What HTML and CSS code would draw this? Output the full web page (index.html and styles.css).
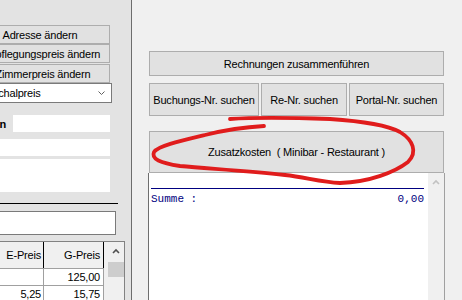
FILE: index.html
```html
<!DOCTYPE html>
<html lang="de">
<head>
    <meta charset="UTF-8">
    <title>Rechnungen</title>
    <link rel="stylesheet" href="styles.css">
</head>
<body>
    <div class="screen">
        <aside class="side">
            <div class="side-inner">
                <button class="btn side-btn">Adresse ändern</button>
                <button class="btn side-btn">Verpflegungspreis ändern</button>
                <button class="btn side-btn spaced">Zimmerpreis ändern</button>
                <div class="select">
                    <span>Pauschalpreis</span>
                    <svg width="7" height="5" viewBox="0 0 7 5"><polyline points="0.5,0.5 3.5,3.5 6.5,0.5" fill="none" stroke="#606060" stroke-width="1"/></svg>
                </div>

                <div class="field-row">
                    <label>Personen</label>
                    <div class="field short"></div>
                </div>
                <div class="field wide"></div>
                <div class="field area"></div>

                <div class="rule"></div>
                <div class="box"></div>

                <div class="grid">
                    <div class="cols">
                        <div class="row head">
                            <div class="cell c1">E-Preis</div>
                            <div class="cell c2">G-Preis</div>
                        </div>
                        <div class="row">
                            <div class="cell c1"></div>
                            <div class="cell c2">125,00</div>
                        </div>
                        <div class="row">
                            <div class="cell c1">5,25</div>
                            <div class="cell c2">15,75</div>
                        </div>
                    </div>
                    <div class="grid-gap"></div>
                    <div class="vbar">
                        <div class="arrow">
                            <svg width="8" height="6" viewBox="0 0 8 6"><polyline points="1,5 4,2 7,5" fill="none" stroke="#505050" stroke-width="1.6"/></svg>
                        </div>
                        <div class="thumb"></div>
                    </div>
                </div>
            </div>
        </aside>

        <main class="main">
            <button class="btn wide-btn">Rechnungen zusammenführen</button>
            <div class="btn-row">
                <button class="btn b-buchung">Buchungs-Nr. suchen</button>
                <button class="btn b-re">Re-Nr. suchen</button>
                <button class="btn b-portal">Portal-Nr. suchen</button>
            </div>
            <button class="btn zusatz">Zusatzkosten&nbsp; ( Minibar - Restaurant )</button>

            <div class="report">
                <div class="paper">
                    <div class="sum-rule"></div>
                    <div class="sum">
                        <span>Summe :</span>
                        <span>0,00</span>
                    </div>
                </div>
                <div class="vbar light">
                    <div class="arrow">
                        <svg width="8" height="6" viewBox="0 0 8 6"><polyline points="1,5 4,2 7,5" fill="none" stroke="#c2c2c2" stroke-width="1.6"/></svg>
                    </div>
                </div>
            </div>
        </main>

        <!-- red hand drawn marking on top of the screenshot -->
        <svg class="markup" width="462" height="300" viewBox="0 0 462 300">
            <path d="M264,126 C245,127 225,130 205,135 C180,141 158,146 154,152 C151,159 160,163 180,166 C215,169 250,171 285,175 C305,177 320,182 340,183 C370,182 395,172 408,162 C418,152 413,140 400,132 C385,124 360,121 330,119 C300,118 260,117 230,119"
                  fill="none" stroke="#e01c1c" stroke-width="3.8" stroke-linecap="round" stroke-linejoin="round"/>
        </svg>
    </div>
</body>
</html>
```

FILE: styles.css
```css
body {
    margin: 0;
    background-color: #f0f0f0;
    font-family: "Liberation Sans", Arial, sans-serif;
    font-size: 11px;
    letter-spacing: -0.2px;
    color: #000;
}

.screen {
    position: relative;
    display: flex;
    width: 462px;
    height: 300px;
    overflow: hidden;
}

.btn {
    font: inherit;
    letter-spacing: inherit;
    color: #000;
    background-color: #e1e1e1;
    border: 1px solid #adadad;
    padding: 0;
    box-sizing: border-box;
    white-space: nowrap;
}

/* left panel, cut off at the window edge */
.side {
    width: 131px;
    flex: none;
    background-color: #e3e3e3;
    border-right: 1px solid #6d6d6d;
    overflow: hidden;
}

.side-inner {
    margin-left: -30px;
    padding-top: 25px;
    display: flex;
    flex-direction: column;
    align-items: flex-start;
}

.side-btn {
    width: 140px;
    height: 19px;
}

.spaced {
    width: 134px;
    margin: 1px 0 0 6px;
}

.select {
    width: 142px;
    height: 20px;
    box-sizing: border-box;
    background-color: #fff;
    border: 1px solid #7a7a7a;
    display: flex;
    align-items: center;
    justify-content: space-between;
    padding: 0 6px 0 3px;
}

.field-row {
    display: flex;
    align-items: center;
    margin-top: 12px;
}

.field-row label {
    width: 36px;
    display: flex;
    justify-content: flex-end;
    font-weight: bold;
    white-space: nowrap;
}

.field {
    background-color: #fff;
    height: 17px;
}

.short {
    width: 97px;
    margin-left: 7px;
}

.wide {
    width: 140px;
    margin-top: 7px;
}

.area {
    width: 140px;
    height: 33px;
    margin-top: 3px;
}

.rule {
    width: 148px;
    height: 1px;
    margin-top: 11px;
    background-color: #000;
}

.box {
    width: 146px;
    height: 24px;
    margin-top: 7px;
    box-sizing: border-box;
    background-color: #fff;
    border: 1px solid #7a7a7a;
}

.grid {
    display: flex;
    width: 155px;
    height: 70px;
    margin-top: 6px;
    box-sizing: border-box;
    border-top: 1px solid #828282;
    border-right: 1px solid #828282;
    background-color: #f0f0f0;
}

.cols {
    width: 134px;
}

.row {
    display: flex;
    height: 16px;
    background-color: #fff;
    border-bottom: 1px solid #a0a0a0;
}

.row.head {
    height: 26px;
    background-color: #f0f0f0;
}

.cell {
    box-sizing: border-box;
    display: flex;
    align-items: center;
    justify-content: flex-end;
    padding-right: 2px;
    border-right: 1px solid #a0a0a0;
}

.head .cell {
    border-right-color: #000;
}

.c1 {
    width: 74px;
}

.c2 {
    width: 60px;
    padding-right: 3px;
}

.grid-gap {
    width: 4px;
}

.vbar {
    width: 16px;
    background-color: #f0f0f0;
}

.arrow {
    height: 17px;
    display: flex;
    align-items: center;
    justify-content: center;
}

.thumb {
    height: 15px;
    margin-top: 3px;
    background-color: #cdcdcd;
}

/* right side */
.main {
    flex: 1;
    display: flex;
    flex-direction: column;
    padding: 51px 18px 0 17px;
}

.wide-btn {
    height: 25px;
}

.btn-row {
    display: flex;
    gap: 2px;
    height: 33px;
    margin-top: 7px;
}

.b-buchung {
    width: 110px;
}

.b-re {
    width: 86px;
}

.b-portal {
    flex: 1;
}

.zusatz {
    height: 42px;
    margin-top: 15px;
}

.report {
    flex: 1;
    display: flex;
    margin: 0 -1px;
}

.paper {
    flex: 1;
    background-color: #fff;
    border-left: 1px solid #6e6e6e;
    padding: 15px 4px 0 2px;
}

.sum-rule {
    height: 1px;
    background-color: #000080;
}

.sum {
    display: flex;
    justify-content: space-between;
    padding-top: 4px;
    font-family: "Liberation Mono", "Courier New", monospace;
    font-size: 11px;
    letter-spacing: 0;
    line-height: 13px;
    color: #000080;
}

.vbar.light {
    border-right: 1px solid #a0a0a0;
}

.markup {
    position: absolute;
    top: 0;
    left: 0;
    pointer-events: none;
}
```
